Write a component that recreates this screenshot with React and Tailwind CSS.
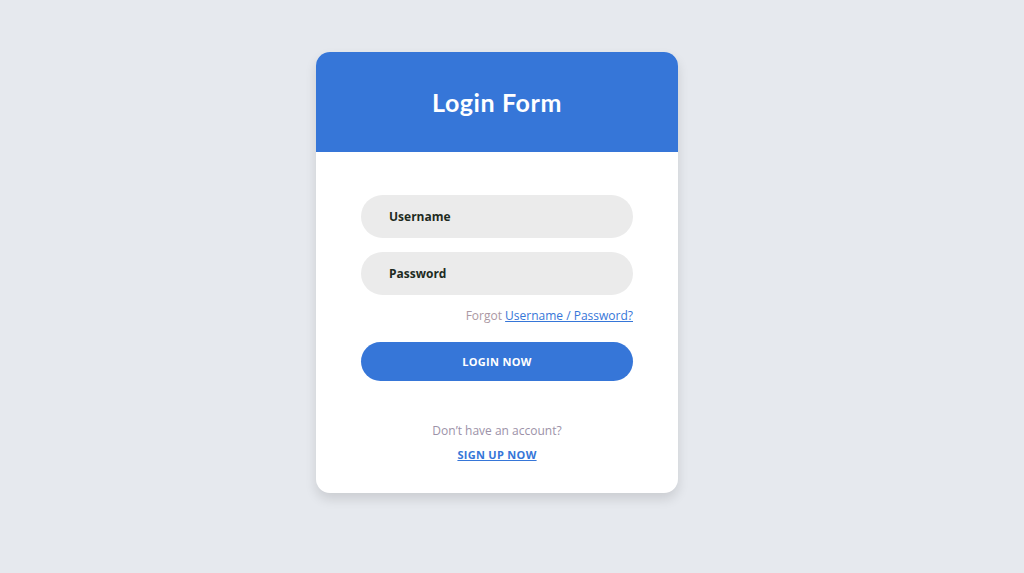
import React from 'react';

const App = () => {
  return (
    <div className="min-h-screen w-full bg-[#e6e9ee] flex justify-center pt-[52px] pr-[30px]" style={{ fontFamily: '"Open Sans", sans-serif' }}>
      <div className="w-[362px] h-[441px] bg-white rounded-[14px] overflow-hidden shadow-[0_6px_12px_rgba(0,0,0,0.12)] flex flex-col">
        <div className="h-[100px] bg-[#3676d8] flex items-center justify-center pt-[2px]">
          <h1 className="text-white text-[25px] font-bold tracking-[0.6px]" style={{ fontFamily: 'Lato, sans-serif' }}>
            Login Form
          </h1>
        </div>

        <div className="px-[45px] pt-[43px] flex flex-col">
          <div className="h-[43px] rounded-full bg-[#ebebeb] flex items-center pl-[28px]">
            <span className="text-[12px] font-bold text-[#1e2b1f]">Username</span>
          </div>
          <div className="h-[43px] rounded-full bg-[#ebebeb] flex items-center pl-[28px] mt-[14px]">
            <span className="text-[12px] font-bold text-[#1e2b1f]">Password</span>
          </div>

          <p className="text-right text-[12px] mt-[12px] text-[#ab98a3]">
            Forgot <a href="#" className="text-[#3676d8] underline">Username / Password?</a>
          </p>

          <button className="mt-[17px] h-[39px] rounded-full bg-[#3676d8] text-white text-[11px] font-bold tracking-[0.3px] pt-[1px]">
            LOGIN NOW
          </button>

          <p className="text-center text-[12px] text-[#9c92a8] mt-[41px]">Don’t have an account?</p>
          <a href="#" className="text-center text-[11px] font-bold text-[#3676d8] underline mt-[7px] tracking-[0.3px]">
            SIGN UP NOW
          </a>
        </div>
      </div>
    </div>
  );
};

export default App;
